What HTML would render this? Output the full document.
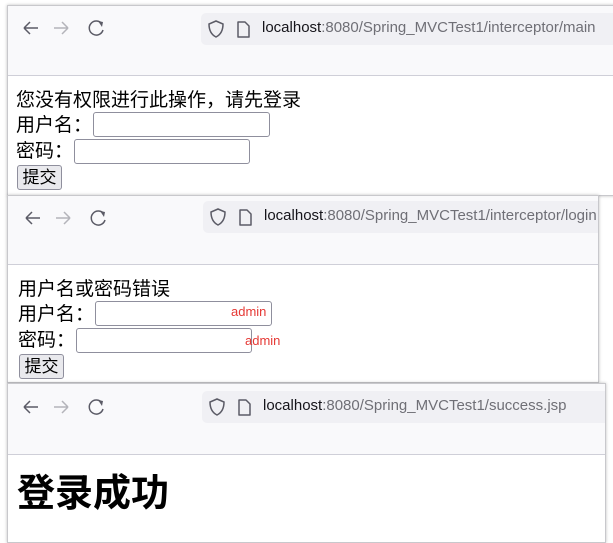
<!DOCTYPE html>
<html><head><meta charset="utf-8"><style>
*{margin:0;padding:0;box-sizing:border-box}
body{width:613px;height:531px;background:#fff;position:relative;overflow:hidden;font-family:"Liberation Sans","Noto Sans CJK SC",sans-serif}
.win{position:absolute;background:#fff;border:1px solid #c8c8cc;box-shadow:0 0 3px rgba(0,0,0,.25);overflow:hidden}
.tb{position:absolute;left:0;right:0;top:0;background:#f9f9fb;border-bottom:1px solid #cfcfd8}
.addr{position:absolute;background:#f0f0f4;border-radius:5px;height:32px;right:-10px}
.url{position:absolute;left:61px;top:6px;font-size:15px;color:#15141a;white-space:nowrap}
.url span{color:#6f6f76}
.ic{position:absolute}
.t{position:absolute;font-size:19px;color:#000;white-space:nowrap;line-height:20px}
.in{position:absolute;border:1px solid #8f8f9d;border-radius:3px;background:#fff;height:25px}
.btn{position:absolute;border:1px solid #8f8f9d;border-radius:3px;background:#e9e9ed;font-size:17px;line-height:23px;text-align:center;width:45px;height:25px}
.red{position:absolute;color:#e53935;font-size:13px}
</style></head><body>

<svg width="0" height="0" style="position:absolute"><defs>
<g id="nav">
<path d="M8 9 H22 M8 9 L14 3 M8 9 L14 15" stroke="#5b5b66" stroke-width="1.5" fill="none" transform="translate(8,13)"/>
<path d="M8 9 H22 M22 9 L16 3 M22 9 L16 15" stroke="#b4b4ba" stroke-width="1.5" fill="none" transform="translate(38,13)"/>
<g transform="translate(80,14)"><path d="M14 4 A7 7 0 1 0 15 10" stroke="#5b5b66" stroke-width="1.5" fill="none"/><path d="M10 1 L15 2 L14 7 Z" fill="#5b5b66"/></g>
</g>
<g id="sec">
<path d="M9 2 L16 5 C16 12 13 16 9 18 C5 16 2 12 2 5 Z" stroke="#5b5b66" stroke-width="1.5" fill="none" transform="translate(6,6)"/>
<path d="M3 2 H10 L14 6 V17 H3 Z" stroke="#5b5b66" stroke-width="1.5" fill="none" stroke-linejoin="round" transform="translate(34,7)"/>
</g>
</defs></svg>

<div class="win" style="left:7px;top:5px;width:612px;height:191px">
<div class="tb" style="height:70px"></div>
<svg class="ic" style="left:0;top:0" width="130" height="40"><use href="#nav"/></svg>
<div class="addr" style="left:193px;top:7px;width:430px">
<svg class="ic" style="left:0;top:0" width="60" height="32"><use href="#sec"/></svg>
<div class="url">localhost<span>:8080/Spring_MVCTest1/interceptor/main</span></div>
</div>
<div class="t" style="left:8px;top:85px">您没有权限进行此操作，请先登录</div>
<div class="t" style="left:8px;top:110px">用户名：</div>
<div class="in" style="left:85px;top:106px;width:177px"></div>
<div class="t" style="left:8px;top:136px">密码：</div>
<div class="in" style="left:66px;top:133px;width:176px"></div>
<div class="btn" style="left:9px;top:159px">提交</div>
</div>

<div class="win" style="left:7px;top:195px;width:592px;height:188px">
<div class="tb" style="height:69px"></div>
<svg class="ic" style="left:2px;top:0" width="130" height="40"><use href="#nav"/></svg>
<div class="addr" style="left:195px;top:5px;width:420px">
<svg class="ic" style="left:0;top:0" width="60" height="32"><use href="#sec"/></svg>
<div class="url">localhost<span>:8080/Spring_MVCTest1/interceptor/login</span></div>
</div>
<div class="t" style="left:10px;top:84px">用户名或密码错误</div>
<div class="t" style="left:10px;top:109px">用户名：</div>
<div class="in" style="left:87px;top:105px;width:177px"></div>
<div class="red" style="left:223px;top:108px">admin</div>
<div class="t" style="left:10px;top:135px">密码：</div>
<div class="in" style="left:68px;top:132px;width:176px"></div>
<div class="red" style="left:237px;top:137px">admin</div>
<div class="btn" style="left:11px;top:158px">提交</div>
</div>

<div class="win" style="left:7px;top:383px;width:599px;height:160px">
<div class="tb" style="height:71px"></div>
<svg class="ic" style="left:0;top:1px" width="130" height="40"><use href="#nav"/></svg>
<div class="addr" style="left:194px;top:7px;width:420px">
<svg class="ic" style="left:0;top:0" width="60" height="32"><use href="#sec"/></svg>
<div class="url">localhost<span>:8080/Spring_MVCTest1/success.jsp</span></div>
</div>
<div class="t" style="left:9px;top:90px;font-size:38px;font-weight:bold;line-height:40px">登录成功</div>
</div>

</body></html>
